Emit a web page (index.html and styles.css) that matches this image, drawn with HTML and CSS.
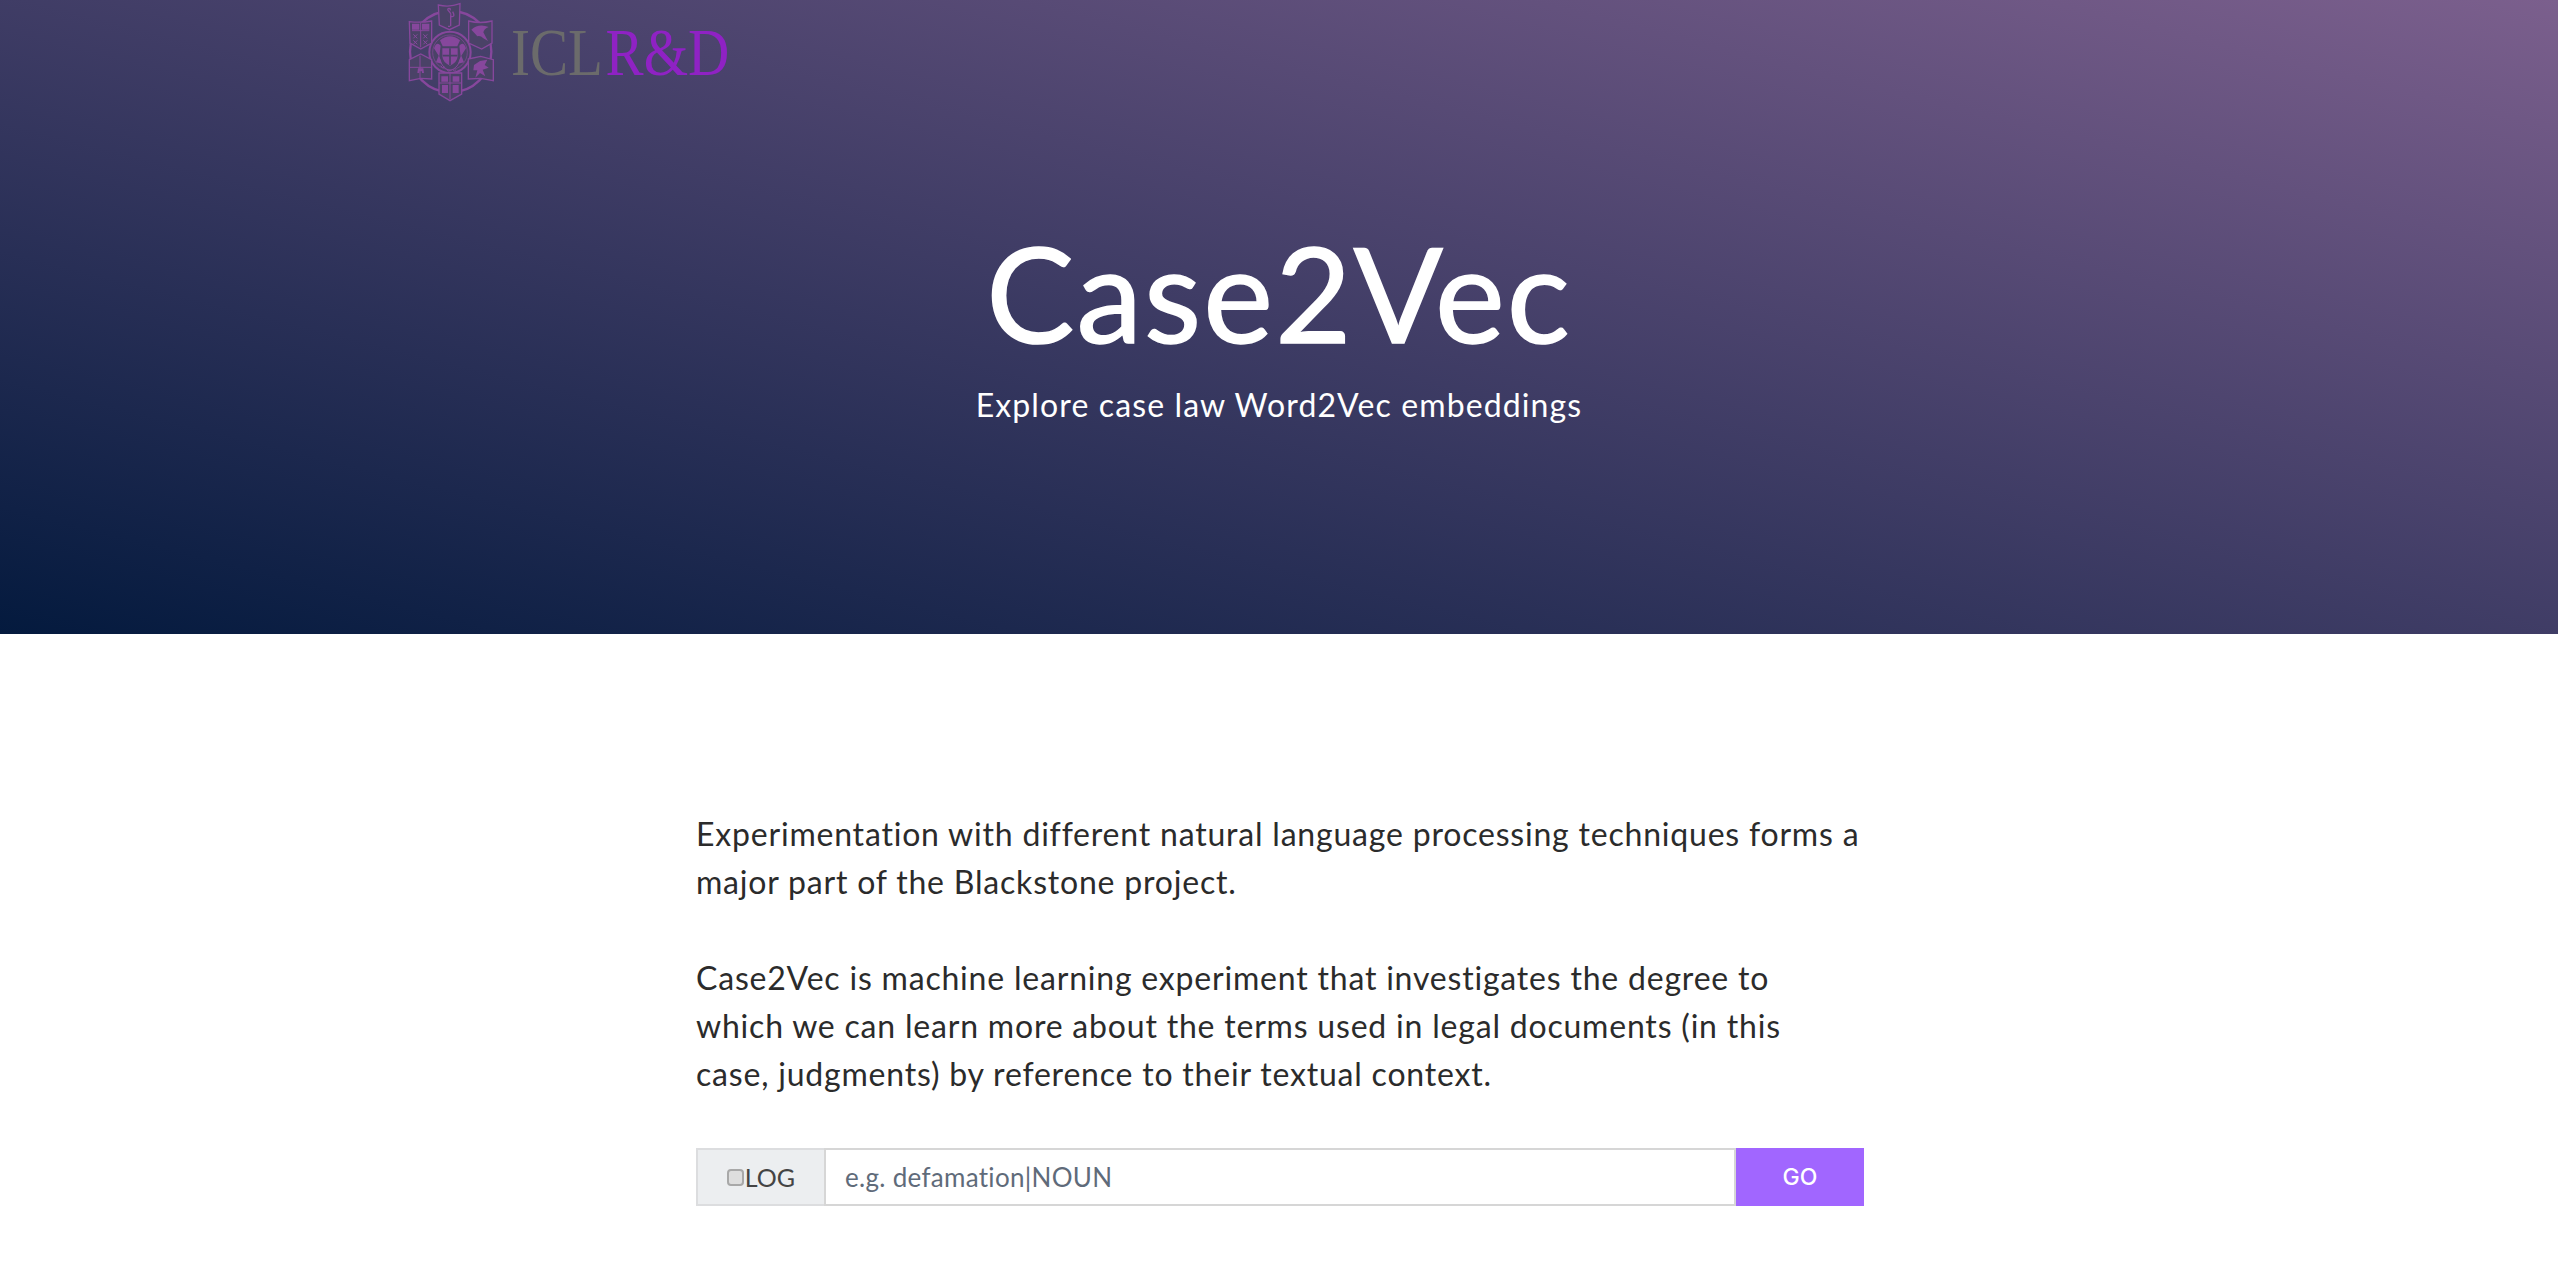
FILE: index.html
```html
<!DOCTYPE html>
<html lang="en">
<head>
<meta charset="utf-8">
<title>Case2Vec</title>
<link rel="stylesheet" href="styles.css">
</head>
<body>
<header class="hero">
  <div class="brand">
    <svg class="crest" viewBox="0 0 330 315" aria-hidden="true">
      <g class="crest-line">
        <circle cx="152" cy="158" r="122" stroke-width="7"/>
        <circle cx="150" cy="160" r="62" stroke-width="6" class="crest-bg"/>
        <circle cx="150" cy="160" r="52" stroke-width="2"/>
        <path class="crest-bg" d="M115 18 Q148 26 180 14 L178 78 L148 92 L118 78 Z"/>
        <path class="crest-bg" d="M28 68 Q62 72 95 66 L95 132 L62 150 L30 132 Z"/>
        <path class="crest-bg" d="M206 66 Q240 75 276 66 L276 132 L245 150 L206 132 Z"/>
        <path class="crest-bg" d="M28 182 L62 165 L95 182 L95 240 L62 238 L28 245 Z"/>
        <path class="crest-bg" d="M205 180 L242 172 L280 182 L280 245 L242 238 L205 240 Z"/>
        <path class="crest-bg" d="M117 222 L185 222 L185 285 L150 305 L117 285 Z"/>
        <path d="M60 170 V240 M28 205 H95 M150 222 V300 M117 252 H185" stroke-width="3"/>
        <path d="M36 95 H88 M62 72 V145 M40 106 L52 118 M52 106 L40 118 M70 106 L82 118 M82 106 L70 118 M40 124 L52 136 M52 124 L40 136 M70 124 L82 136 M82 124 L70 136" stroke-width="3"/>
        <path d="M152 82 V52 Q154 42 146 36 Q140 30 147 28 Q153 28 150 34 M152 52 Q168 56 158 38 M150 82 L144 82" stroke-width="4"/>
        <path d="M118 178 Q124 205 150 216 Q176 205 182 178" stroke-width="3"/>
        <path d="M122 200 q6 10 12 4 M140 212 q6 8 11 2 M158 212 q6 8 11 -1" stroke-width="3"/>
      </g>
      <g class="crest-fill">
        <path d="M36 74 h22 v18 h-22 Z M66 74 h22 v18 h-22 Z"/>
        <path d="M214 92 Q236 72 266 84 Q252 90 250 100 Q258 116 264 126 L250 118 Q240 108 232 112 Q224 102 214 92 Z"/>
        <path d="M222 198 L240 186 L262 182 L254 198 L266 206 L248 212 L256 232 L240 222 L226 236 L232 214 L220 214 Z"/>
        <path d="M54 208 h16 l2 14 h-6 v-5 h-8 v5 h-6 Z"/>
        <path d="M124 232 h20 v16 h-20 Z M158 232 h20 v16 h-20 Z M126 258 h18 v24 h-18 Z M158 258 h18 v24 h-18 Z"/>
        <path d="M120 124 Q150 100 180 124 L172 142 H128 Z"/>
        <path d="M127 148 H173 V172 Q172 190 150 200 Q128 190 127 172 Z"/>
        <path d="M102 148 Q110 126 122 140 L118 172 L126 194 L108 190 L116 170 Z"/>
        <path d="M198 148 Q190 126 178 140 L182 172 L174 194 L192 190 L184 170 Z"/>
      </g>
      <path class="crest-cut" d="M150 148 V198 M128 170 H172" stroke-width="5"/>
    </svg>
    <span class="wordmark"><span class="wm-grey">ICL</span><span class="wm-purple">R&amp;D</span></span>
  </div>
  <div class="hero-copy">
    <h1 class="hero-title">Case2Vec</h1>
    <p class="hero-sub">Explore case law Word2Vec embeddings</p>
  </div>
</header>
<main class="content">
  <p class="intro">Experimentation with different natural language processing techniques forms a major part of the Blackstone project.</p>
  <p class="intro">Case2Vec is machine learning experiment that investigates the degree to<br>which we can learn more about the terms used in legal documents (in this<br>case, judgments) by reference to their textual context.</p>
  <form class="search">
    <label class="addon"><input class="check" type="checkbox"><span>LOG</span></label>
    <input class="term" type="text" placeholder="e.g. defamation|NOUN">
    <button class="go" type="button">GO</button>
  </form>
</main>
</body>
</html>
```
FILE: styles.css
```css
html, body { margin: 0; padding: 0; background: #fff; }
body { font-family: "Lato", "Liberation Sans", sans-serif; color: #2b2b2b; height: 1274px; overflow: hidden; }
.hero {
  height: 634px;
  background: linear-gradient(to top right, #041a3e 0%, #7b5f8d 100%);
  display: flex;
  flex-direction: column;
  color: #fff;
}
.brand { display: flex; align-items: center; padding-left: 400px; height: 103px; flex: none; }
.crest { width: 110px; height: 105px; flex: none; }
.crest-line { fill: none; stroke: #86479c; stroke-width: 4; }
.crest-bg { fill: #4a4267; }
.crest-fill { fill: #86479c; }
.crest-cut { fill: none; stroke: #4a4267; }
.wordmark { margin: 0 0 0 1px; font-family: "Liberation Serif", serif; font-size: 68px; line-height: 1; transform: scaleX(0.84); transform-origin: left center; white-space: nowrap; }
.wm-grey { color: #6b6b6b; margin-right: 3px; }
.wm-purple { color: #8f22c4; }
.hero-copy { text-align: center; padding-top: 114px; }
.hero-title { margin: 0; font-weight: 400; font-size: 132px; line-height: 150px; letter-spacing: 2px; -webkit-text-stroke: 1.5px #fff; }
.hero-sub { margin: 18px 0 0; font-size: 32px; line-height: 40px; letter-spacing: 1.12px; }
.content { width: 1168px; margin: 0 auto; padding: 176px 0 0 2px; }
.intro { margin: 0 0 48px; font-size: 32px; line-height: 48px; letter-spacing: 0.8px; }
.search { display: flex; height: 58px; margin-top: 50px; }
.addon { display: flex; align-items: center; justify-content: center; box-sizing: border-box; width: 128px; background: #eceef0; border: 2px solid #dcdddf; border-right: none; font-size: 25px; color: #444; }
.check { appearance: none; box-sizing: border-box; width: 17px; height: 17px; margin: 0 1px 0 0; flex: none; background: #dedede; border: 2px solid #a8a8a8; border-radius: 4px; }
.term { flex: 1; min-width: 0; box-sizing: border-box; border: 2px solid #d6d6d6; padding: 0 19px; font: inherit; font-size: 26px; letter-spacing: 0.3px; outline: none; }
.term::placeholder { color: #5f6b7a; opacity: 1; }
.go { width: 128px; border: none; background: #a166ff; color: #fff; font-family: "Inter", sans-serif; font-size: 23px; font-weight: 500; }
```
